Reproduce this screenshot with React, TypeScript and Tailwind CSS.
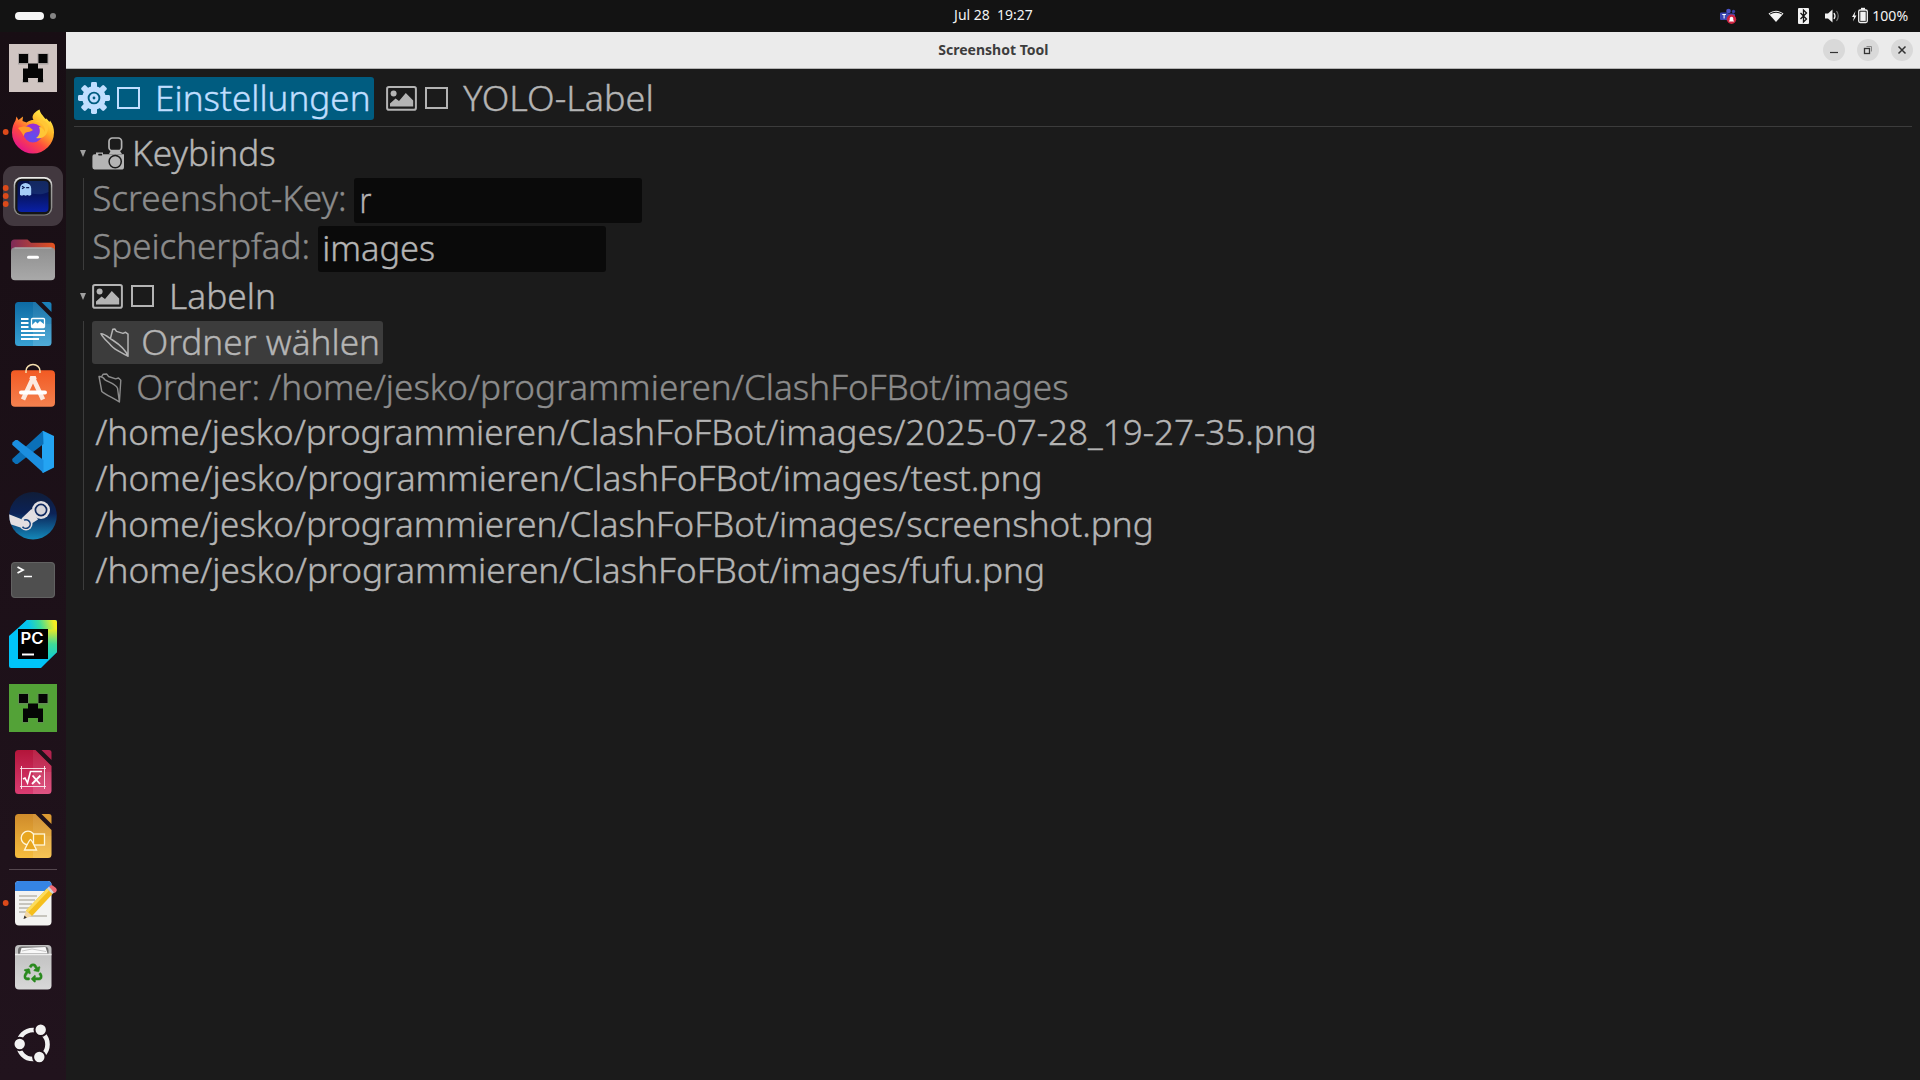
import { useLayoutEffect, useRef, useState } from "react";
import type { ReactNode } from "react";
import { FaRecycle } from "react-icons/fa";

/* A line of text whose inked width is fitted to `w` pixels. */
function Fit({ children, w, className = "" }: { children: string; w: number; className?: string }) {
  const ref = useRef<HTMLSpanElement>(null);
  const [t, setT] = useState({ s: 1, x: 0 });
  useLayoutEffect(() => {
    const el = ref.current;
    const ctx = document.createElement("canvas").getContext("2d");
    if (!el || !ctx) return;
    const cs = getComputedStyle(el);
    ctx.font = `${cs.fontWeight} ${cs.fontSize} ${cs.fontFamily}`;
    const m = ctx.measureText(children);
    const s = w / (m.actualBoundingBoxLeft + m.actualBoundingBoxRight);
    setT({ s, x: m.actualBoundingBoxLeft * s - 0.8 });
  }, [children, w]);
  return (
    <span className={`block shrink-0 whitespace-pre ${className}`} style={{ width: w }}>
      <span
        ref={ref}
        className="inline-block origin-left"
        style={{ transform: `translateX(${t.x}px) scaleX(${t.s})` }}
      >
        {children}
      </span>
    </span>
  );
}

function Gear({ className = "" }) {
  return (
    <svg viewBox="0 0 32 32" className={`h-8 w-8 shrink-0 ${className}`} fill="currentColor">
      <g>
        {[0, 45, 90, 135].map((a) => (
          <rect key={a} x="13" y="0" width="6" height="32" rx="1.4" transform={`rotate(${a} 16 16)`} />
        ))}
        <circle cx="16" cy="16" r="11.8" />
      </g>
      <circle cx="16" cy="16" r="5.4" fill="none" stroke="#005c80" strokeWidth="1.9" />
      <circle cx="16" cy="16" r="1.4" fill="#005c80" />
    </svg>
  );
}

function Picture({ className = "" }) {
  return (
    <svg viewBox="0 0 31 25" className={`h-[25px] w-[31px] shrink-0 ${className}`}>
      <rect x="1.1" y="1.1" width="28.8" height="22.6" rx="1.8" fill="none" stroke="currentColor" strokeWidth="2" />
      <circle cx="7.6" cy="7.6" r="3" fill="currentColor" />
      <path d="M4 20.6v-3.2l5.6-5 3.4 2.6 6.8-8 7.4 7.4v6.2z" fill="currentColor" />
    </svg>
  );
}

function Box({ className = "" }) {
  return <span className={`block h-[22px] w-[23px] shrink-0 border-2 border-current ${className}`} />;
}

function Camera({ className = "" }) {
  return (
    <svg viewBox="0 0 33 33" className={`h-[33px] w-[33px] shrink-0 ${className}`} fill="currentColor">
      <rect x="17" y="1" width="12.6" height="12.6" rx="3.4" fill="none" stroke="currentColor" strokeWidth="1.7" />
      <path d="M18.5 14h9.5l2 3h-13z" />
      <path d="M2.5 17.2h1.500V15.6h7v1.6h21v12.8a2.6 2.6 0 0 1-2.6 2.6h-27A2.6 2.6 0 0 1 .4 30V19.4a2.2 2.2 0 0 1 2.1-2.2z" />
      <rect x="6.2" y="16.8" width="4" height="1.6" rx=".6" fill="#1b1b1b" />
      <circle cx="23.2" cy="24.6" r="6.1" fill="none" stroke="#1b1b1b" strokeWidth="1.5" />
    </svg>
  );
}

function Arrow({ className = "" }) {
  return (
    <svg viewBox="0 0 6 7" className={`h-[7px] w-[6px] shrink-0 ${className}`}>
      <path d="M0 0h6L3 7z" fill="#a0a0a0" />
    </svg>
  );
}

function OpenFolder({ className = "" }) {
  return (
    <svg viewBox="0 0 30 30" className={`h-[30px] w-[30px] shrink-0 ${className}`} fill="none" stroke="currentColor" strokeWidth="1.5" strokeLinejoin="round">
      <path d="M28 28.2C21 24 15.5 22.4 11 17.4C7 13 2.400 9.500 1 5.800C5 6 9 9.800 12.500 12C18 15.500 25 20 28 28.200V6.200L25.600 4.300L23 5.400L16.500 3.400L14.800 1L12.800 1.200L10.400 10.600" />
    </svg>
  );
}

function ClosedFolder({ className = "" }) {
  return (
    <svg viewBox="0 0 24 30" className={`h-[30px] w-[24px] shrink-0 ${className}`} fill="none" stroke="currentColor" strokeWidth="1.4" strokeLinejoin="round">
      <path d="M21.400 29C15 24.500 8.500 22.500 3.800 18.500L1 3.500C3.500 3.200 5.500 4.500 7 6.800C11 9.500 17.500 11 19.500 15.200L21.400 29L22.800 7.200L20.500 5L17.600 5.800L10.600 3.500L8.600 1L5.200 1.200L3.600 3.600" />
    </svg>
  );
}

function Tile({ children, pips = [] }: { children: ReactNode; pips?: number[] }) {
  return (
    <svg viewBox="0 0 66 64" className="block h-16 w-[66px] shrink-0">
      {children}
      {pips.map((y) => (
        <circle key={y} cx="5.700" cy={y} r="2.900" fill="#dc4a1a" />
      ))}
    </svg>
  );
}

function Creeper({ bg }: { bg: string }) {
  return (
    <Tile>
      <rect x="9" y="8" width="48" height="48" fill={bg} />
      <g fill="#777" opacity=".45">
        <path d="M18 17.500h11v11H18zM37.500 17.500h11v11h-11z" />
        <path d="M22.500 43h6v4h-6zM37.500 43h6v4h-6z" />
      </g>
      <path d="M19 18h9v9h-9zM38.500 18h9v9h-9zM28 27.500h10v5h5V46h-5v-4H28v4h-5V32.500h5z" fill="#050505" />
    </Tile>
  );
}

function Office({ id, from, to, fold, children }: { id: string; from: string; to: string; fold: string; children: ReactNode }) {
  return (
    <Tile>
      <defs>
        <linearGradient id={id} x1="0" y1="0" x2="0" y2="1">
          <stop offset="0" stopColor={from} />
          <stop offset="1" stopColor={to} />
        </linearGradient>
      </defs>
      <path d="M18 10h17.500L51.500 26v24.500a3.500 3.500 0 0 1-3.500 3.500H18.500a3.500 3.500 0 0 1-3.500-3.500V13.500a3.500 3.500 0 0 1 3.500-3.500z" fill={`url(#${id})`} />
      <path d="M33 10h2.500L51.500 26v6H33z" fill="#fff" opacity=".07" />
      <path d="M33 32h18.500v18.500a3.500 3.500 0 0 1-3.500 3.500H33z" fill="#fff" opacity=".12" />
      <path d="M41.500 10h7.500a2.500 2.500 0 0 1 2.500 2.500V20z" fill={fold} />
      {children}
    </Tile>
  );
}

function Dock() {
  return (
    <nav className="flex w-[66px] shrink-0 flex-col bg-gradient-to-b from-[#180e14] to-[#21131d] pt-1">
      <Creeper bg="#d0c5c2" />
      <Tile pips={[32]}>
        <defs>
          <linearGradient id="fx" x1=".85" y1=".1" x2=".25" y2=".95">
            <stop offset="0" stopColor="#fff04a" />
            <stop offset=".35" stopColor="#ffae25" />
            <stop offset=".65" stopColor="#ff4b3e" />
            <stop offset="1" stopColor="#e4158a" />
          </linearGradient>
          <radialGradient id="fxb" cx=".5" cy=".7" r=".7">
            <stop offset="0" stopColor="#5b50f0" />
            <stop offset="1" stopColor="#a12bd0" />
          </radialGradient>
        </defs>
        <path d="M39.500 9.500c1 4.500 4 6.500 6 9.500l1-.5 3 3.500.5-1.500c3 4 4 8 4 12a21 21 0 0 1-42 0c0-5 1.500-9 3.500-12l1-4 2 3.500 4.500-3.500-.5 4.500 4 1.500c3-2 5-2.500 7-2.500-2-3-1-7 6-10.500z" fill="url(#fx)" />
        <circle cx="33" cy="33" r="9.500" fill="url(#fxb)" />
        <path d="M18 28c4-2 9-2 12-.5l3 2.500c-2 2-5 1.500-7 2.500s-1.500 2.500-2.500 3.500c-1-3-3-5-5.500-8z" fill="#ff9a2b" />
        <path d="M33.500 22c7-1.500 12 4 11.500 10-1-3-3.500-5-6-5 2 5 0 9-3 11 8 2 13-5 12-12-1-4.500-5-8-14.500-4z" fill="#ffc636" />
      </Tile>
      <Tile pips={[24, 32, 40]}>
        <defs>
          <linearGradient id="gh" x1="0" y1="0" x2="0" y2="1">
            <stop offset="0" stopColor="#06124a" />
            <stop offset=".45" stopColor="#071560" />
            <stop offset="1" stopColor="#0920a8" />
          </linearGradient>
          <linearGradient id="ghf" x1="0" y1="0" x2="0" y2="1">
            <stop offset="0" stopColor="#f0f0ee" />
            <stop offset=".3" stopColor="#a0a09e" />
            <stop offset="1" stopColor="#858583" />
          </linearGradient>
        </defs>
        <rect x="3" y="2" width="60" height="60" rx="11" fill="#42383f" />
        <rect x="13.700" y="13" width="38.600" height="38.500" rx="8" fill="url(#ghf)" />
        <rect x="15.200" y="14.800" width="35.600" height="35.600" rx="6.500" fill="#151515" />
        <rect x="17.500" y="17" width="31" height="31" rx="4" fill="url(#gh)" />
        <path d="M29 17h15.500a4 4 0 0 1 4 4v7c-6 3-12 2.500-17.500 1.500z" fill="#3b6aa0" opacity=".25" />
        <path d="M20 31V24.500a5.600 5.600 0 0 1 11.200 0V31l-2 .8-1.800-.8-1.800.8-1.800-.8-1.900.8z" fill="#a5cdf7" />
        <path d="M22 22.200l2.200 1.300-2.200 1.300M26.200 23.600h3" stroke="#0b1a55" strokeWidth="1.100" fill="none" />
      </Tile>
      <Tile>
        <defs>
          <linearGradient id="fb" x1="0" x2="1">
            <stop offset="0" stopColor="#7d2a58" />
            <stop offset="1" stopColor="#e4531f" />
          </linearGradient>
          <linearGradient id="ff" x1="0" y1="0" x2="0" y2="1">
            <stop offset="0" stopColor="#8f8f8f" />
            <stop offset="1" stopColor="#a9a9a9" />
          </linearGradient>
        </defs>
        <path d="M11 24v-9a3.500 3.500 0 0 1 3.500-3.500h13l3.500 3.200h20.500a3.500 3.500 0 0 1 3.500 3.500V28H11z" fill="url(#fb)" />
        <rect x="11" y="19.500" width="44" height="32.700" rx="4" fill="url(#ff)" />
        <path d="M14.500 20h37" stroke="#b8b8b8" strokeWidth="1" />
        <rect x="27" y="27.700" width="12" height="3" rx="1.500" fill="#fff" />
      </Tile>
      <Office id="ow" from="#0d6aa3" to="#38a1d3" fold="#1a80b8">
        <path d="M21 27h7.500M21 31h7.500M21 35h7.500M21 39h24M21 43h24M21 47h18" stroke="#fff" strokeWidth="1.900" />
        <rect x="31.500" y="26.500" width="13" height="9" rx="1" fill="#2b8fc6" stroke="#fff" strokeWidth="1.300" />
        <path d="M32 35v-2l3.500-3.500 2 2 2.500-2.500 4.500 3.500V35z" fill="#fff" />
      </Office>
      <Tile>
        <defs>
          <linearGradient id="st" x1="0" y1="0" x2="0" y2="1">
            <stop offset="0" stopColor="#f25a23" />
            <stop offset="1" stopColor="#f4814f" />
          </linearGradient>
        </defs>
        <rect x="11" y="14.200" width="44" height="36.500" rx="4" fill="url(#st)" />
        <path d="M26 17v-2a7 6.500 0 0 1 14 0v2" fill="none" stroke="#f5dfae" strokeWidth="1.500" />
        <path d="M33 22L23 43.500M33 22l10 21.500" stroke="#fbe9e0" strokeWidth="4.600" />
        <path d="M30.300 20h5.400l1 3h-7.400z" fill="#fbe9e0" />
        <rect x="19" y="34.500" width="28" height="4" rx="2" fill="#fff" />
      </Tile>
      <Tile>
        <path d="M43 10.700L54 16v31.500L43 53l-1-1V12z" fill="#24a4f2" />
        <path d="M43 10.700L12.200 39l.2 2.300L15.500 44l2 .1L43.500 24z" fill="#0b70b8" />
        <path d="M12.200 24.800l.2-2.300L15.500 20l2-.1L43.500 40V53z" fill="#1b8fe0" />
      </Tile>
      <Tile>
        <defs>
          <linearGradient id="sm" x1="0" y1="0" x2="0" y2="1">
            <stop offset="0" stopColor="#101d38" />
            <stop offset=".45" stopColor="#0b2257" />
            <stop offset="1" stopColor="#1489ba" />
          </linearGradient>
          <clipPath id="smc">
            <circle cx="33" cy="31.700" r="23.800" />
          </clipPath>
        </defs>
        <circle cx="33" cy="31.700" r="23.800" fill="url(#sm)" />
        <g clipPath="url(#smc)">
          <path d="M7 29.500L21 35l9 5-5 5L7 39z" fill="#e2dfe2" />
          <path d="M31.500 25l6.500 10.500-9.500 6-7-7z" fill="#e2dfe2" />
        </g>
        <circle cx="26" cy="40" r="6.500" fill="#e2dfe2" />
        <path d="M24 36.200a4.300 4.300 0 1 1-1.500 6.500" fill="none" stroke="#12407c" strokeWidth="1.500" />
        <circle cx="41" cy="26" r="9" fill="#e2dfe2" />
        <circle cx="41" cy="26" r="5.600" fill="#d5d3d8" stroke="#102a60" strokeWidth="1.700" />
      </Tile>
      <Tile>
        <rect x="11" y="14" width="44" height="36" rx="4" fill="#4f4f4f" />
        <rect x="11.500" y="14.500" width="43" height="35" rx="3.500" fill="none" stroke="#626262" />
        <path d="M17.500 19l5.500 3-5.500 3" fill="none" stroke="#fff" strokeWidth="1.800" />
        <path d="M24 28.500h8" stroke="#fff" strokeWidth="1.500" />
      </Tile>
      <Tile>
        <defs>
          <linearGradient id="py" gradientUnits="userSpaceOnUse" x1="29" y1="17" x2="54" y2="10">
            <stop offset="0" stopColor="#05c4f0" />
            <stop offset=".45" stopColor="#3ddc9a" />
            <stop offset="1" stopColor="#f6ee22" />
          </linearGradient>
          <linearGradient id="pz" gradientUnits="userSpaceOnUse" x1="52" y1="18" x2="50" y2="46">
            <stop offset="0" stopColor="#e0ea2c" />
            <stop offset=".5" stopColor="#3fd998" />
            <stop offset="1" stopColor="#14cfd0" />
          </linearGradient>
        </defs>
        <path d="M27 8h28a2 2 0 0 1 2 2v30L41 56H11a2 2 0 0 1-2-2V24z" fill="#00c4f8" />
        <path d="M27 8h28a2 2 0 0 1 2 2v8H17z" fill="url(#py)" />
        <path d="M48 17.500h9V40l-9 8.500z" fill="url(#pz)" />
        <rect x="18" y="17" width="30" height="30" fill="#000" />
        <text x="20.500" y="32" fontFamily="Inter, sans-serif" fontWeight="600" fontSize="15.500" textLength="23" lengthAdjust="spacingAndGlyphs" fill="#fff">PC</text>
        <path d="M22 42.500h12" stroke="#fff" strokeWidth="2" />
      </Tile>
      <Creeper bg="#53a237" />
      <Office id="om" from="#b3153a" to="#db3c72" fold="#b3234f">
        <path d="M20 28.500h26M20 46.500h26M21.500 26v23M44.500 26v23" stroke="#fff" strokeWidth=".9" opacity=".9" />
        <path d="M23 39l2-1 2.500 5 3-11.500h11.500" fill="none" stroke="#fff" strokeWidth="1.600" />
        <path d="M32.500 35.500l7.500 8.500M40.500 35.500L32 44" stroke="#fff" strokeWidth="1.800" />
      </Office>
      <Office id="od" from="#cf8b2b" to="#f6bd3e" fold="#dc9a33">
        <circle cx="28" cy="34" r="6.800" fill="#e8a61f" stroke="#fff6d8" strokeWidth="1.300" />
        <rect x="33.500" y="30" width="11" height="11" fill="#e8a61f" stroke="#fff6d8" strokeWidth="1.300" />
        <path d="M30.500 35.500q1 0 6 10.500h-12q5-10.500 6-10.500z" fill="#e8a61f" stroke="#fff6d8" strokeWidth="1.300" />
      </Office>
      <div className="mx-[9px] mt-px mb-px h-px shrink-0 bg-[#55484f]" />
      <Tile pips={[32]}>
        <rect x="15" y="10" width="36.500" height="44.500" rx="4" fill="#f3f3f1" />
        <path d="M15 20v-6a4 4 0 0 1 4-4h28.500a4 4 0 0 1 4 4v6z" fill="#3584e4" />
        <path d="M19 25h18M19 29h16M19 33h13M19 37h10M19 41h7M29 45h18" stroke="#b9b7ac" strokeWidth="1.700" />
        <path d="M23.500 48l2.500-8.500 6 5.500z" fill="#f1d6a5" />
        <path d="M23.500 48l1-3.500 2.300 2.200z" fill="#333" />
        <path d="M26 39.500L47 17.500l5.500 5.500L32 45z" fill="#f5bf1d" />
        <path d="M26 39.500L47 17.500l2 2-21 22z" fill="#fbdc5e" />
        <path d="M47 17.500l2-2 5.500 5.500-2 2z" fill="#d5d5d5" />
        <path d="M49 15.500a3.500 3.500 0 0 1 5 0l2 1.500a3 3 0 0 1 0 4l-1.500 1z" fill="#ee6a74" />
      </Tile>
      <Tile>
        <defs>
          <linearGradient id="tr" x1="0" y1="0" x2="0" y2="1">
            <stop offset="0" stopColor="#bdbdbd" />
            <stop offset="1" stopColor="#d8d8d8" />
          </linearGradient>
        </defs>
        <rect x="15" y="10" width="36.500" height="44.500" rx="4" fill="url(#tr)" />
        <path d="M18 19v-3.500a4 4 0 0 1 4-4h22.500a4 4 0 0 1 4 4V19z" fill="#6f6f6f" />
        <path d="M20 18.500l1.500-5.500 24-1 2 6.500z" fill="#f8f8f8" />
        <path d="M22 16l10-2 14 2.500" stroke="#bbb" strokeWidth=".8" fill="none" />
        <path d="M15 19.500h36.500" stroke="#ececec" strokeWidth="1.300" />
        <g transform="translate(23.600 28.500) scale(1.180)">
          <FaRecycle x={0} y={0} width={16} height={16} color="#2b8a1f" stroke="#2b8a1f" strokeWidth={14} />
        </g>
      </Tile>
      <div className="mt-[13px]">
        <Tile>
          <circle cx="33" cy="32.500" r="14.500" fill="none" stroke="#f2f2f2" strokeWidth="4.600" />
          {[[40.700, 17.800], [19.700, 32], [39.300, 45]].map(([x, y]) => (
            <circle key={x} cx={x} cy={y} r="6.200" fill="#f2f2f2" stroke="#20121b" strokeWidth="2" />
          ))}
        </Tile>
      </div>
    </nav>
  );
}

function TopBar() {
  return (
    <header className="flex h-8 shrink-0 items-center bg-[#131313] text-[15px] leading-5 text-[#f2f2f2]">
      <span className="ml-[15px] h-2 w-[29px] rounded-full bg-[#f6f6f6]" />
      <span className="ml-1.5 h-1.5 w-1.5 rounded-full bg-[#858585]" />
      <Fit w={80} className="-mt-[4px] ml-[897px]">{"Jul 28  19:27"}</Fit>
      <svg viewBox="0 0 220 32" className="ml-[667px] h-8 w-[173.500px] shrink-0" preserveAspectRatio="xMinYMin slice">
        <rect x="20" y="12.500" width="8" height="7.500" rx="1" fill="#3a45b0" />
        <circle cx="28.500" cy="11" r="2.300" fill="#4a51c5" />
        <circle cx="33.500" cy="11.500" r="1.700" fill="#3a3f9c" />
        <rect x="26" y="13.500" width="9" height="7" rx="1.500" fill="#4048ae" />
        <path d="M22.300 14.500h3.600M24.100 14.500v4" stroke="#fff" strokeWidth="1" />
        <circle cx="31.500" cy="19.300" r="4.700" fill="#cf2441" />
        <path d="M28.800 21.500l.9-1.500v-1.500a1.800 1.800 0 0 1 3.600 0V20l.9 1.500z" fill="#fff" />
        <path d="M68.500 13.500q7.500-5.500 15 0L76 22z" fill="#f2f2f2" />
        <path d="M70 14q6-3.500 12 0" fill="none" stroke="#131313" strokeWidth="1" />
        <rect x="98" y="8" width="11" height="16" rx="1" fill="#f2f2f2" />
        <path d="M100.500 13l6 6-3 3V10l3 3-6 6" fill="none" stroke="#131313" strokeWidth="1.300" />
        <path d="M125 13.500h3l4.500-4v13l-4.500-4h-3z" fill="#f2f2f2" />
        <path d="M134 13q2 3 0 6" fill="none" stroke="#f2f2f2" strokeWidth="1.300" />
        <path d="M136.500 11q3.500 5 0 10" fill="none" stroke="#777" strokeWidth="1.200" />
        <path d="M155.500 11l-3.500 6h2l-1 4.500 3.500-6h-2z" fill="#f2f2f2" />
        <rect x="158.700" y="10" width="8.600" height="12.500" rx="1.500" fill="none" stroke="#f2f2f2" strokeWidth="1.300" />
        <rect x="161" y="7.800" width="4" height="2" fill="#f2f2f2" />
        <rect x="160.300" y="11.700" width="5.400" height="9.200" fill="#f2f2f2" />
      </svg>
      <Fit w={34.5} className="-mt-[2px]">100%</Fit>
    </header>
  );
}

function WinButton({ children }: { children: ReactNode }) {
  return (
    <svg viewBox="0 0 22 22" className="h-[22px] w-[22px]" fill="none" stroke="#333">
      <circle cx="11" cy="11" r="11" fill="#d9d9d9" stroke="none" />
      {children}
    </svg>
  );
}

function TitleBar() {
  return (
    <div className="flex h-[37px] shrink-0 border-b border-[#b4b4b4] bg-[#ebebeb] pt-[7px] text-[14.500px] leading-[22px] font-bold text-[#3d3d3d]">
      <Fit w={110} className="-mt-px ml-[872.5px]">Screenshot Tool</Fit>
      <div className="ml-auto flex gap-3 pr-[7px]">
        <WinButton>
          <path d="M7 13.500h8" strokeWidth="1.200" />
        </WinButton>
        <WinButton>
          <rect x="7.500" y="9.500" width="5" height="5" strokeWidth="1.300" />
          <path d="M9.500 7.500h5v5" stroke="#888" />
        </WinButton>
        <WinButton>
          <path d="M7.500 7.500l7 7M14.500 7.500l-7 7" strokeWidth="1.500" />
        </WinButton>
      </div>
    </div>
  );
}

const base = "/home/jesko/programmieren/ClashFoFBot/images/";
const files = [
  { name: "2025-07-28_19-27-35.png", w: 1219 },
  { name: "test.png", w: 945 },
  { name: "screenshot.png", w: 1056 },
  { name: "fufu.png", w: 947.5 },
];

export default function App() {
  return (
    <div className="flex h-[1080px] w-[1920px] flex-col overflow-hidden bg-[#1b1b1b] font-['Noto_Sans','Open_Sans',sans-serif]">
      <TopBar />
      <div className="flex min-h-0 flex-1">
        <Dock />
        <div className="flex min-w-0 flex-1 flex-col">
          <TitleBar />
          <main className="flex flex-1 flex-col bg-[#1b1b1b] pr-2 pl-2 text-[34px] leading-[44px] font-light text-[#b4b4b4] [-webkit-text-stroke:0.4px]">
            <div className="mt-2 flex h-[43px] shrink-0">
              <div className="flex h-[43px] w-[300px] rounded-[3px] bg-[#005c80] text-[#c0deff]">
                <Gear className="mt-[5px] ml-1" />
                <Box className="mt-[10px] ml-[7px]" />
                <Fit w={210} className="-mt-px ml-[19px]">Einstellungen</Fit>
              </div>
              <Picture className="mt-[9px] ml-3" />
              <Box className="mt-[10px] ml-2" />
              <Fit w={187.5} className="-mt-px ml-4">YOLO-Label</Fit>
            </div>
            <hr className="mt-1.5 h-px shrink-0 border-0 bg-[#3c3c3c]" />

            <div className="flex h-[51px] shrink-0 pl-1.5">
              <Arrow className="mt-[23px]" />
              <Camera className="mt-[10px] ml-1.5" />
              <Fit w={139.5} className="mt-1 ml-[11px]">Keybinds</Fit>
            </div>
            <div className="ml-[9px] flex h-[92px] shrink-0 flex-col gap-[3px] border-l border-[#3c3c3c] pl-[9px] text-[#8c8c8c]">
              <div className="flex h-[45px] shrink-0">
                <Fit w={251} className="-mt-[2px] ml-[0.5px]">Screenshot-Key:</Fit>
                <div className="ml-[9.5px] h-[45px] w-72 rounded-[3px] bg-[#0a0a0a] pl-[7.5px] text-[#b4b4b4]">
                  <Fit w={9.8}>r</Fit>
                </div>
              </div>
              <div className="flex h-[46px] shrink-0">
                <Fit w={214.5} className="-mt-[2px] ml-[0.5px]">Speicherpfad:</Fit>
                <div className="ml-2.5 h-[46px] w-72 rounded-[3px] bg-[#0a0a0a] pl-[7px] text-[#b4b4b4]">
                  <Fit w={110}>images</Fit>
                </div>
              </div>
            </div>

            <div className="flex h-[51px] shrink-0 pl-1.5">
              <Arrow className="mt-[23px]" />
              <Picture className="mt-[14px] ml-1.5" />
              <Box className="mt-[15px] ml-2" />
              <Fit w={101.5} className="mt-1 ml-[19px]">Labeln</Fit>
            </div>
            <div className="ml-[9px] flex h-[269px] shrink-0 flex-col border-l border-[#3c3c3c] pl-2">
              <div className="flex h-[43px] w-[291px] shrink-0 rounded-[3px] bg-[#3c3c3c]">
                <OpenFolder className="mt-[7px] ml-2" />
                <Fit w={234.5} className="-mt-px ml-[13.500px]">Ordner wählen</Fit>
              </div>
              <div className="flex h-[46px] shrink-0 pt-px text-[#8c8c8c]">
                <ClosedFolder className="mt-2 ml-1.5" />
                <Fit w={929.5} className="ml-[17px]">{"Ordner: /home/jesko/programmieren/ClashFoFBot/images"}</Fit>
              </div>
              {files.map((f) => (
                <div key={f.name} className="h-[46px] shrink-0 pl-[3.500px]">
                  <Fit w={f.w}>{base + f.name}</Fit>
                </div>
              ))}
            </div>
          </main>
        </div>
      </div>
    </div>
  );
}
